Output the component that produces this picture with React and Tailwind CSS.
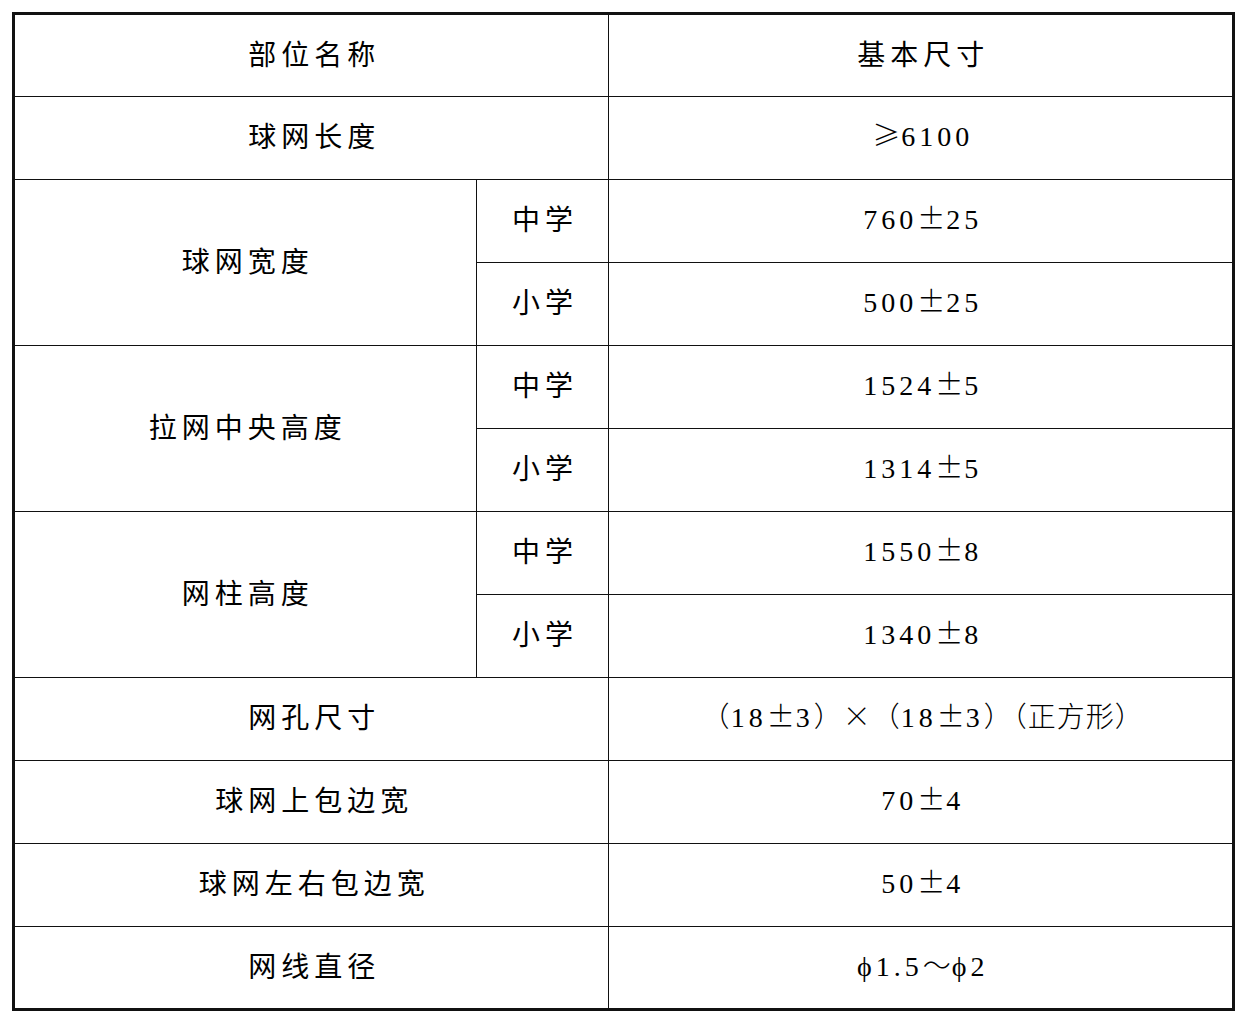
import React from "react";

const font = { fontFamily: '"Liberation Serif", "Noto Sans CJK SC", serif' };

const rows = [
  { name: "球网长度", value: "≥6100" },
  {
    name: "球网宽度",
    subs: [
      ["中学", "760±25"],
      ["小学", "500±25"],
    ],
  },
  {
    name: "拉网中央高度",
    subs: [
      ["中学", "1524±5"],
      ["小学", "1314±5"],
    ],
  },
  {
    name: "网柱高度",
    subs: [
      ["中学", "1550±8"],
      ["小学", "1340±8"],
    ],
  },
  { name: "网孔尺寸", value: "（18±3）×（18±3）（正方形）" },
  { name: "球网上包边宽", value: "70±4" },
  { name: "球网左右包边宽", value: "50±4" },
  { name: "网线直径", value: "ϕ1.5～ϕ2" },
];

const cell = "border border-[#111] text-center align-middle h-[83px] p-0";
const cjk = "text-[28px] tracking-[5px] pl-[5px]";
const num = "text-[28px] tracking-[4px] pl-[4px] pb-[5px]";

// symbols drawn in the CJK face so they come out full width like the print
const wide = /[±≥×（）～\u4e00-\u9fff]/;

function Value({ text }) {
  return (
    <>
      {[...text].map((ch, i) =>
        wide.test(ch) ? (
          <span
            key={i}
            className="tracking-[1px]"
            style={{ fontFamily: '"Noto Sans CJK SC", serif', fontWeight: 300 }}
          >
            {ch}
          </span>
        ) : (
          <span key={i}>{ch}</span>
        )
      )}
    </>
  );
}

export default function App() {
  return (
    <div className="bg-white w-[1247px] h-[1020px] pt-[12px] pl-[12px]" style={font}>
      <table className="border-collapse border-[3px] border-[#111] w-[1223px] text-black">
        <colgroup>
          <col className="w-[464px]" />
          <col className="w-[133px]" />
          <col className="w-[626px]" />
        </colgroup>
        <tbody>
          <tr>
            <td colSpan={2} className={`${cell} ${cjk}`}>部位名称</td>
            <td className={`${cell} ${cjk}`}>基本尺寸</td>
          </tr>
          {rows.map((r) =>
            r.subs ? (
              r.subs.map((s, i) => (
                <tr key={r.name + i}>
                  {i === 0 && (
                    <td rowSpan={2} className={`${cell} ${cjk}`}>{r.name}</td>
                  )}
                  <td className={`${cell} ${cjk}`}>{s[0]}</td>
                  <td className={`${cell} ${num}`}><Value text={s[1]} /></td>
                </tr>
              ))
            ) : (
              <tr key={r.name}>
                <td colSpan={2} className={`${cell} ${cjk}`}>{r.name}</td>
                <td className={`${cell} ${num}`}><Value text={r.value} /></td>
              </tr>
            )
          )}
        </tbody>
      </table>
    </div>
  );
}
